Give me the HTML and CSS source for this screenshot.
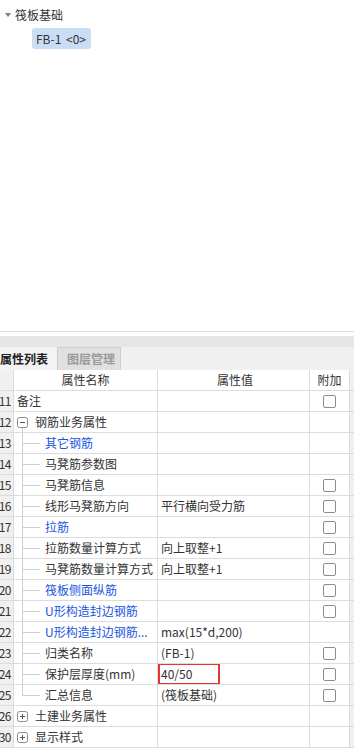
FILE: index.html
```html
<!DOCTYPE html>
<html lang="zh">
<head>
<meta charset="utf-8">
<title>属性列表</title>
<link rel="stylesheet" href="styles.css">
</head>
<body>
<div class="tree">
  <div class="tree-root"><span class="caret"></span><span>筏板基础</span></div>
  <div class="tree-child"><span class="sel">FB-1 &lt;0&gt;</span></div>
</div>
<div class="splitter"></div>
<div class="band"></div>
<div class="tabs">
  <div class="tab active">属性列表</div>
  <div class="tab">图层管理</div>
</div>
<div class="grid">
  <div class="row head">
    <div class="c num"></div><div class="c name center">属性名称</div><div class="c val center">属性值</div><div class="c add center">附加</div><div class="c rest"></div>
  </div>
  <div class="row">
    <div class="c num">11</div><div class="c name"><span class="txt top">备注</span></div><div class="c val"></div><div class="c add"><span class="chk"></span></div><div class="c rest"></div>
  </div>
  <div class="row">
    <div class="c num">12</div><div class="c name"><span class="exp open"><svg width="11" height="11" viewBox="0 0 11 11"><rect x="0.5" y="0.5" width="10" height="10" rx="2" fill="#fff" stroke="#8a8a8a"/><path d="M3 5.5h5" stroke="#555"/></svg></span><span class="txt">钢筋业务属性</span></div><div class="c val"></div><div class="c add"></div><div class="c rest"></div>
  </div>
  <div class="row">
    <div class="c num">13</div><div class="c name"><span class="br"></span><span class="txt blue">其它钢筋</span></div><div class="c val"></div><div class="c add"></div><div class="c rest"></div>
  </div>
  <div class="row">
    <div class="c num">14</div><div class="c name"><span class="br"></span><span class="txt">马凳筋参数图</span></div><div class="c val"></div><div class="c add"></div><div class="c rest"></div>
  </div>
  <div class="row">
    <div class="c num">15</div><div class="c name"><span class="br"></span><span class="txt">马凳筋信息</span></div><div class="c val"></div><div class="c add"><span class="chk"></span></div><div class="c rest"></div>
  </div>
  <div class="row">
    <div class="c num">16</div><div class="c name"><span class="br"></span><span class="txt">线形马凳筋方向</span></div><div class="c val">平行横向受力筋</div><div class="c add"><span class="chk"></span></div><div class="c rest"></div>
  </div>
  <div class="row">
    <div class="c num">17</div><div class="c name"><span class="br"></span><span class="txt blue">拉筋</span></div><div class="c val"></div><div class="c add"><span class="chk"></span></div><div class="c rest"></div>
  </div>
  <div class="row">
    <div class="c num">18</div><div class="c name"><span class="br"></span><span class="txt">拉筋数量计算方式</span></div><div class="c val">向上取整+1</div><div class="c add"><span class="chk"></span></div><div class="c rest"></div>
  </div>
  <div class="row">
    <div class="c num">19</div><div class="c name"><span class="br"></span><span class="txt">马凳筋数量计算方式</span></div><div class="c val">向上取整+1</div><div class="c add"><span class="chk"></span></div><div class="c rest"></div>
  </div>
  <div class="row">
    <div class="c num">20</div><div class="c name"><span class="br"></span><span class="txt blue">筏板侧面纵筋</span></div><div class="c val"></div><div class="c add"><span class="chk"></span></div><div class="c rest"></div>
  </div>
  <div class="row">
    <div class="c num">21</div><div class="c name"><span class="br"></span><span class="txt blue">U形构造封边钢筋</span></div><div class="c val"></div><div class="c add"><span class="chk"></span></div><div class="c rest"></div>
  </div>
  <div class="row">
    <div class="c num">22</div><div class="c name"><span class="br"></span><span class="txt blue">U形构造封边钢筋...</span></div><div class="c val">max(15*d,200)</div><div class="c add"></div><div class="c rest"></div>
  </div>
  <div class="row">
    <div class="c num">23</div><div class="c name"><span class="br"></span><span class="txt">归类名称</span></div><div class="c val">(FB-1)</div><div class="c add"><span class="chk"></span></div><div class="c rest"></div>
  </div>
  <div class="row">
    <div class="c num">24</div><div class="c name"><span class="br"></span><span class="txt">保护层厚度(mm)</span></div><div class="c val hl"><span class="mark">40/50</span></div><div class="c add"><span class="chk"></span></div><div class="c rest"></div>
  </div>
  <div class="row">
    <div class="c num">25</div><div class="c name"><span class="br last"></span><span class="txt">汇总信息</span></div><div class="c val">(筏板基础)</div><div class="c add"><span class="chk"></span></div><div class="c rest"></div>
  </div>
  <div class="row">
    <div class="c num">26</div><div class="c name"><span class="exp"><svg width="11" height="11" viewBox="0 0 11 11"><rect x="0.5" y="0.5" width="10" height="10" rx="2" fill="#fff" stroke="#8a8a8a"/><path d="M3 5.5h5M5.5 3v5" stroke="#555"/></svg></span><span class="txt">土建业务属性</span></div><div class="c val"></div><div class="c add"></div><div class="c rest"></div>
  </div>
  <div class="row">
    <div class="c num">30</div><div class="c name"><span class="exp"><svg width="11" height="11" viewBox="0 0 11 11"><rect x="0.5" y="0.5" width="10" height="10" rx="2" fill="#fff" stroke="#8a8a8a"/><path d="M3 5.5h5M5.5 3v5" stroke="#555"/></svg></span><span class="txt">显示样式</span></div><div class="c val"></div><div class="c add"></div><div class="c rest"></div>
  </div>
</div>
</body>
</html>
```
FILE: styles.css
```css
html, body {
  margin: 0;
  padding: 0;
  background: #ffffff;
  width: 354px;
  height: 753px;
  overflow: hidden;
  font-family: "Noto Sans CJK SC", "Noto Sans", sans-serif;
  font-size: 12px;
  color: #333333;
}

.tree {
  height: 331px;
  box-sizing: border-box;
  padding-top: 6px;
}

.tree-root {
  display: flex;
  align-items: center;
  height: 18px;
  padding-left: 5px;
  line-height: 18px;
}

.caret {
  width: 0;
  height: 0;
  border-left: 3px solid transparent;
  border-right: 3px solid transparent;
  border-top: 4px solid #808080;
  margin-right: 4px;
}

.tree-child {
  display: flex;
  padding-left: 32px;
  margin-top: 4px;
}

.sel {
  display: inline-block;
  background: #c9def5;
  border-radius: 3px;
  height: 21px;
  line-height: 21px;
  padding: 0 5px 0 4px;
  color: #333;
  white-space: pre;
  word-spacing: 2px;
}

.splitter {
  height: 0;
  border-top: 1px solid #dcdcdc;
}

.band {
  margin-top: 4px;
  height: 11px;
  background: #e6e6e6;
}

.tabs {
  display: flex;
  height: 23px;
  background: #f0f0f0;
  box-sizing: border-box;
}

.tab {
  height: 23px;
  line-height: 23px;
  box-sizing: border-box;
  font-size: 12px;
}

.tab.active {
  width: 56px;
  background: #f3f3f3;
  color: #222;
  font-weight: bold;
  padding-left: 0;
}

.tab:not(.active) {
  width: 64px;
  background: #e0e0e0;
  border: 1px solid #cfcfcf;
  border-bottom: none;
  color: #9a9a9a;
  padding-left: 9px;
  font-weight: bold;
  line-height: 22px;
  margin-left: 1px;
}

.grid {
  display: flex;
  flex-direction: column;
}

.row {
  display: grid;
  grid-template-columns: 14px 144px 152px 40px 4px;
  height: 21px;
  box-sizing: border-box;
  border-bottom: 1px solid #dcdcdc;
}

.row.head {
  border-top: none;
}

.c {
  height: 20px;
  box-sizing: border-box;
  border-right: 1px solid #dcdcdc;
  display: flex;
  align-items: center;
  white-space: nowrap;
  overflow: hidden;
  line-height: 20px;
  background: #ffffff;
}

.c.rest {
  border-right: none;
  background: #f0f0f0;
}

.c.num {
  background: #f0f0f0;
  justify-content: flex-end;
  padding-right: 2px;
  color: #333;
  letter-spacing: -0.5px;
}

.c.center {
  justify-content: center;
}

.c.val {
  padding-left: 3px;
}

.c.val.hl {
  padding-left: 0;
  align-items: stretch;
}

.mark {
  display: flex;
  align-items: center;
  width: 62px;
  height: 22px;
  margin-top: -1px;
  box-sizing: border-box;
  border: 2px solid #e63333;
  padding-left: 1px;
}

.c.add {
  justify-content: center;
}

.chk {
  display: block;
  width: 13px;
  height: 13px;
  box-sizing: border-box;
  border: 1px solid #8c8c8c;
  border-radius: 2px;
  background: #fff;
}

.txt.top {
  padding-left: 3px;
}

.exp {
  display: flex;
  align-items: center;
  justify-content: center;
  width: 11px;
  height: 20px;
  margin-left: 3px;
  margin-right: 7px;
}

.exp.open {
  background: linear-gradient(#cfcfcf, #cfcfcf) 5px 100% / 1px 50% no-repeat;
}

.exp svg {
  display: block;
}

.br {
  display: block;
  width: 23px;
  height: 20px;
  margin-left: 8px;
  flex: none;
  background:
    linear-gradient(#cfcfcf, #cfcfcf) 0 0 / 1px 100% no-repeat,
    linear-gradient(#cfcfcf, #cfcfcf) 0 50% / 18px 1px no-repeat;
}

.br.last {
  background:
    linear-gradient(#cfcfcf, #cfcfcf) 0 0 / 1px 50% no-repeat,
    linear-gradient(#cfcfcf, #cfcfcf) 0 50% / 18px 1px no-repeat;
}

.blue {
  color: #1a56e0;
}
```
